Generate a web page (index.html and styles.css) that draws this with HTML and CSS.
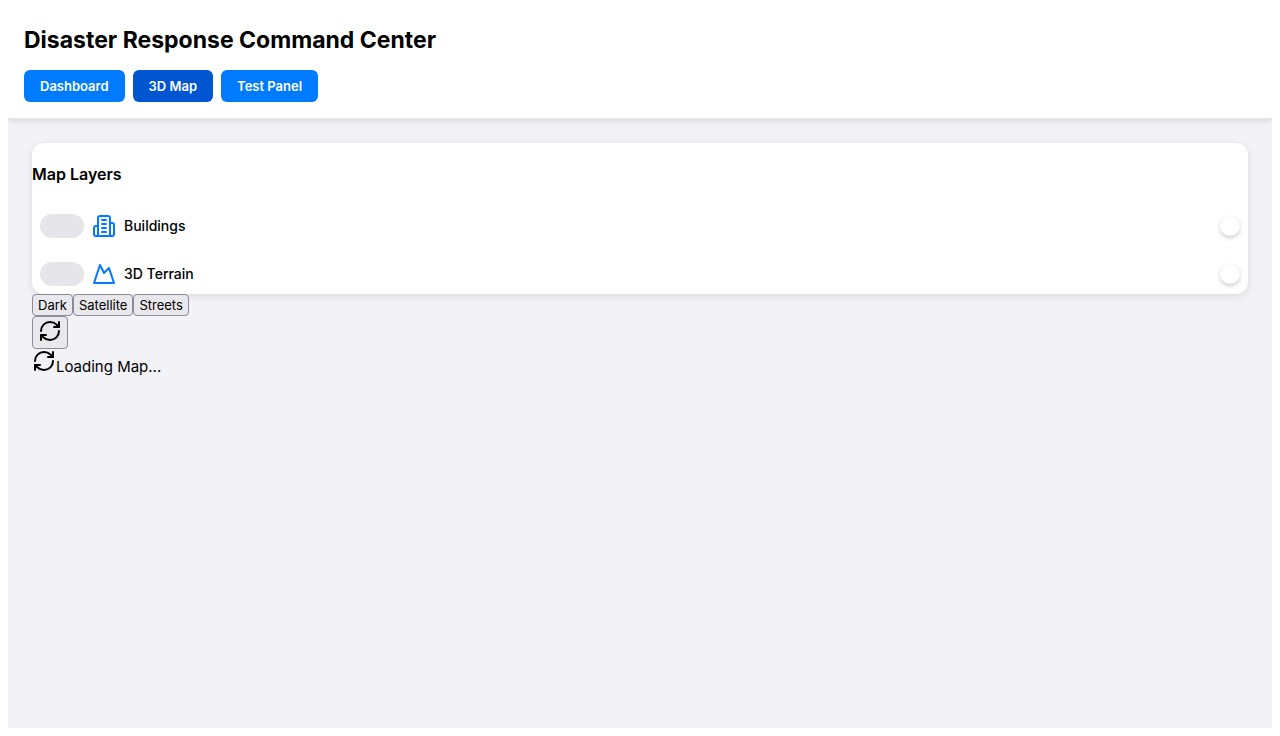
FILE: index.html
```html
<!DOCTYPE html>
<html lang="en">
<head>
<meta charset="utf-8">
<title>Disaster Response Command Center</title>
<link rel="stylesheet" href="styles.css">
</head>
<body>
<div class="app">
  <header class="header">
    <h1 class="title">Disaster Response Command Center</h1>
    <nav class="nav">
      <button class="nav-button">Dashboard</button>
      <button class="nav-button active">3D Map</button>
      <button class="nav-button">Test Panel</button>
    </nav>
  </header>
  <main class="main">
    <section class="layers">
      <h3 class="layers-title">Map Layers</h3>
      <label class="layer">
        <input class="switch" type="checkbox">
        <svg class="icon blue" viewBox="0 0 24 24"><path d="M6 22V4a2 2 0 0 1 2-2h8a2 2 0 0 1 2 2v18Z"/><path d="M6 12H4a2 2 0 0 0-2 2v6a2 2 0 0 0 2 2h2"/><path d="M18 9h2a2 2 0 0 1 2 2v9a2 2 0 0 1-2 2h-2"/><path d="M10 6h4M10 10h4M10 14h4M10 18h4"/></svg>
        <span class="layer-name">Buildings</span>
        <span class="knob"></span>
      </label>
      <label class="layer">
        <input class="switch" type="checkbox">
        <svg class="icon blue" viewBox="0 0 24 24"><path d="m8 3 4 8 5-5 5 15H2L8 3z"/></svg>
        <span class="layer-name">3D Terrain</span>
        <span class="knob"></span>
      </label>
    </section>
    <div class="styles"><button class="plain">Dark</button><button class="plain">Satellite</button><button class="plain">Streets</button></div>
    <div class="refresh"><button class="plain icon-button" aria-label="Refresh map"><svg class="icon" viewBox="0 0 24 24"><path d="M3 12a9 9 0 0 1 9-9 9.75 9.75 0 0 1 6.74 2.74L21 8"/><path d="M21 3v5h-5"/><path d="M21 12a9 9 0 0 1-9 9 9.75 9.75 0 0 1-6.74-2.74L3 16"/><path d="M8 16H3v5"/></svg></button></div>
    <div class="loading"><svg class="icon" viewBox="0 0 24 24"><path d="M3 12a9 9 0 0 1 9-9 9.75 9.75 0 0 1 6.74 2.74L21 8"/><path d="M21 3v5h-5"/><path d="M21 12a9 9 0 0 1-9 9 9.75 9.75 0 0 1-6.74-2.74L3 16"/><path d="M8 16H3v5"/></svg><span>Loading Map...</span></div>
  </main>
</div>
</body>
</html>
```

FILE: styles.css
```css
* { box-sizing: border-box; }
body {
  margin: 8px;
  font-family: Inter, "Liberation Sans", sans-serif;
  font-size: 15px;
  color: #000;
  background: #fff;
}
.app {
  display: flex;
  flex-direction: column;
  min-height: calc(100vh - 16px);
  background: #f2f2f7;
}
.header {
  padding: 16px;
  background: #fff;
  border-bottom: 1px solid #e5e5ea;
  box-shadow: 0 2px 6px rgba(0, 0, 0, 0.1);
}
.title {
  margin: 0 0 14px;
  font-size: 23px;
  line-height: 32px;
  font-weight: 700;
}
.nav { display: flex; gap: 8px; }
.nav-button {
  height: 32px;
  padding: 0 16px;
  border: 0;
  border-radius: 6px;
  background: #007aff;
  color: #fff;
  font-family: inherit;
  font-size: 13px;
  font-weight: 600;
}
.nav-button.active { background: #0055d0; }
.main { flex: 1; padding: 24px; }
.layers {
  background: #fff;
  border-radius: 12px;
  box-shadow: 0 2px 8px rgba(0, 0, 0, 0.1);
  display: flow-root;
}
.layers-title {
  margin: 21px 0 22px;
  font-size: 16px;
  line-height: 20px;
  font-weight: 600;
}
.layer {
  display: flex;
  align-items: center;
  gap: 8px;
  padding: 8px;
}
.layer + .layer { margin-top: 8px; }
.switch {
  appearance: none;
  width: 44px;
  height: 24px;
  margin: 0;
  border-radius: 12px;
  background: #e5e5ea;
}
.layer-name { font-size: 14px; font-weight: 500; line-height: 24px; }
.knob {
  width: 20px;
  height: 20px;
  margin-left: auto;
  border-radius: 50%;
  background: #fff;
  box-shadow: 0 2px 4px rgba(0, 0, 0, 0.2);
}
.icon {
  display: block;
  width: 24px;
  height: 24px;
  fill: none;
  stroke: currentColor;
  stroke-width: 2;
  stroke-linecap: round;
  stroke-linejoin: round;
}
.blue { color: #007aff; }
.styles, .refresh { display: flex; }
.plain {
  height: 22px;
  padding: 0 5px;
  border: 1px solid #8e8a9c;
  border-radius: 4px;
  background: #e9e8ed;
  color: #000;
  font-family: inherit;
  font-size: 13px;
}
.icon-button { height: 33px; padding: 2px 5px 5px; }
.loading { display: flex; }
.loading span { padding-top: 8px; line-height: 20px; }
```
